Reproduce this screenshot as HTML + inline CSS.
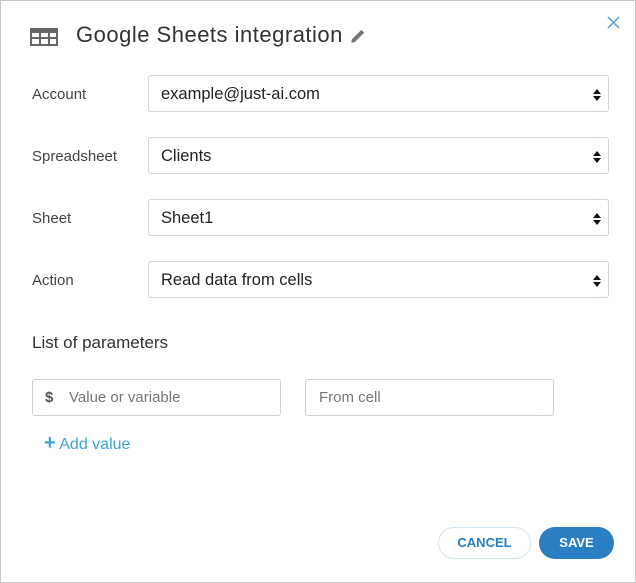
<!DOCTYPE html>
<html><head><style>
body{margin:0;width:636px;height:583px;background:#fff;font-family:"Liberation Sans",sans-serif;position:relative;overflow:hidden}
.frame{position:absolute;left:0;top:0;width:634px;height:581px;border:1px solid #c8c8c8}
.a{position:absolute}
.lbl{position:absolute;left:32px;font-size:15px;color:#444}
.sel{position:absolute;left:148px;width:461px;height:37px;border:1px solid #d0d5da;border-radius:3px;font-size:16.5px;color:#222;line-height:37px;padding-left:12px;box-sizing:border-box}
.arr{position:absolute;right:11px;top:13px;width:0;height:0}
.arr:before{content:"";position:absolute;left:-4px;top:0;border:4px solid transparent;border-bottom:5px solid #111;border-top:0}
.arr:after{content:"";position:absolute;left:-4px;top:7px;border:4px solid transparent;border-top:5px solid #111;border-bottom:0}
.inp{position:absolute;top:379px;width:249px;height:37px;border:1px solid #ccd1d6;border-radius:3px;box-sizing:border-box;font-size:15px;color:#777;line-height:35px}
.btn{position:absolute;top:527px;height:32px;border-radius:16px;box-sizing:border-box;font-size:13px;font-weight:bold;text-align:center;line-height:30px}
</style></head><body>
<div class="frame"></div>
<svg class="a" style="left:30px;top:28px" width="28" height="18" viewBox="0 0 28 18">
<rect x="0" y="0" width="28" height="18" fill="#666"/>
<rect x="2" y="5" width="7" height="4" fill="#fff"/><rect x="11" y="5" width="7" height="4" fill="#fff"/><rect x="20" y="5" width="6" height="4" fill="#fff"/>
<rect x="2" y="11" width="7" height="5" fill="#fff"/><rect x="11" y="11" width="7" height="5" fill="#fff"/><rect x="20" y="11" width="6" height="5" fill="#fff"/>
</svg>
<div class="a" style="left:76px;top:22px;font-size:22px;color:#333;letter-spacing:0.5px">Google Sheets integration</div>
<svg class="a" style="left:349px;top:27px" width="18" height="18" viewBox="0 0 16 16"><path d="M2 14 L2.5 11 L11 2.5 L13.5 5 L5 13.5 Z" fill="#777"/></svg>
<svg class="a" style="left:606px;top:15px" width="15" height="15" viewBox="0 0 15 15"><path d="M2 2L13 13M13 2L2 13" stroke="#6fa8d6" stroke-width="1.8"/></svg>
<div class="lbl" style="top:86px">Account</div>
<div class="sel" style="top:75px">example@just-ai.com<div class="arr"></div></div>
<div class="lbl" style="top:148px">Spreadsheet</div>
<div class="sel" style="top:137px">Clients<div class="arr"></div></div>
<div class="lbl" style="top:210px">Sheet</div>
<div class="sel" style="top:199px">Sheet1<div class="arr"></div></div>
<div class="lbl" style="top:272px">Action</div>
<div class="sel" style="top:261px">Read data from cells<div class="arr"></div></div>
<div class="a" style="left:32px;top:333px;font-size:17px;color:#333">List of parameters</div>
<div class="inp" style="left:32px"><span style="position:absolute;left:12px;color:#555;font-weight:bold">$</span><span style="position:absolute;left:36px">Value or variable</span></div>
<div class="inp" style="left:305px;padding-left:13px">From cell</div>
<div class="a" style="left:44px;top:435px;font-size:16px;color:#3aa6d6"><b style="font-size:20px;line-height:16px">+</b> Add value</div>
<div class="btn" style="left:438px;width:93px;border:1px solid #cfe3f2;color:#2a7fc2">CANCEL</div>
<div class="btn" style="left:539px;width:75px;background:#2a7fc2;color:#fff;line-height:32px">SAVE</div>
</body></html>
